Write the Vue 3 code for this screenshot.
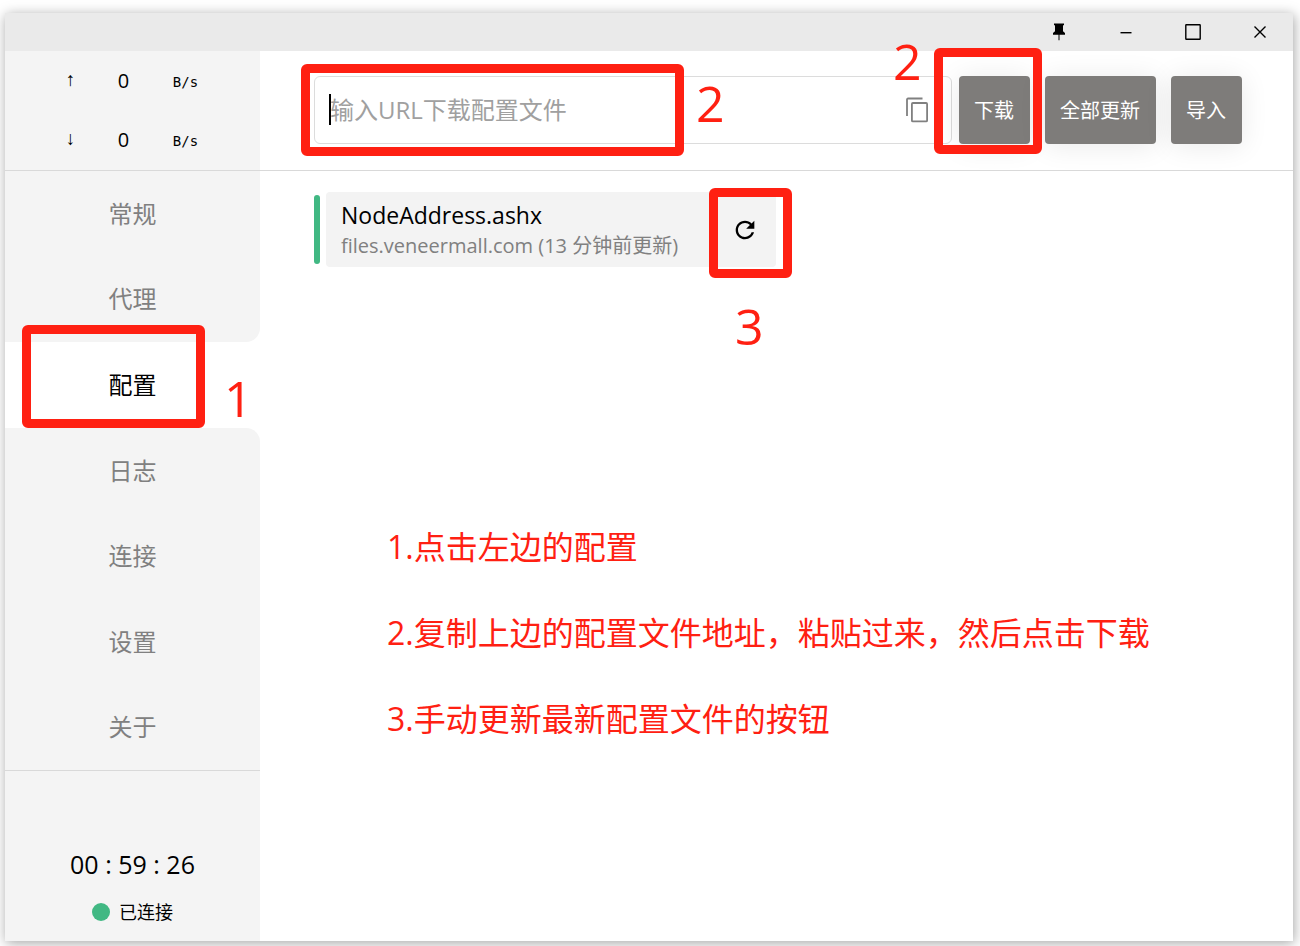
<script setup>
import { ref } from 'vue'

const url = ref('')
const active = ref('配置')
const navItems = ['常规', '代理', '配置', '日志', '连接', '设置', '关于']
const traffic = [
  { arrow: '↑', value: 0 },
  { arrow: '↓', value: 0 }
]
const steps = [
  '1.点击左边的配置',
  '2.复制上边的配置文件地址，粘贴过来，然后点击下载',
  '3.手动更新最新配置文件的按钮'
]
</script>

<template>
  <div class="desktop">
    <div class="window">
      <header class="titlebar">
        <button type="button" aria-label="置顶">
          <svg width="14" height="18" viewBox="0 0 14 18">
            <path d="M2 0.5h10v1.8h-1v6l2 1.7v1.7H1V10l2-1.7v-6H2z" />
            <path d="M6.5 11h1v6.2h-1z" />
          </svg>
        </button>
        <button type="button" aria-label="最小化">
          <svg width="12" height="18" viewBox="0 0 12 18"><path d="M0.5 9h11v1.4h-11z" /></svg>
        </button>
        <button type="button" aria-label="最大化">
          <svg width="16" height="16" viewBox="0 0 16 16">
            <rect x="0.8" y="0.8" width="14.4" height="14.4" rx="0.5" fill="none" stroke="#000" stroke-width="1.4" />
          </svg>
        </button>
        <button type="button" aria-label="关闭">
          <svg width="12" height="12" viewBox="0 0 12 12">
            <path d="M0.5 0.5l11 11M11.5 0.5l-11 11" fill="none" stroke="#000" stroke-width="1.4" />
          </svg>
        </button>
      </header>

      <div class="body">
        <aside class="sidebar">
          <div class="traffic">
            <div v-for="row in traffic" :key="row.arrow" class="traffic-row">
              <span class="arrow">{{ row.arrow }}</span>
              <span class="amount">{{ row.value }}</span>
              <span class="unit">B/s</span>
            </div>
          </div>

          <nav class="nav">
            <div
              v-for="(item, i) in navItems"
              :key="item"
              class="nav-cell"
              :class="{
                active: item === active,
                before: navItems[i + 1] === active,
                after: i > 0 && navItems[i - 1] === active
              }"
            >
              <button type="button" @click="active = item">{{ item }}</button>
              <template v-if="item === '配置'">
                <span class="mark mark-nav"></span>
                <span class="digit digit-nav">1</span>
              </template>
            </div>
          </nav>

          <footer class="status">
            <div class="timer">00 : 59 : 26</div>
            <div class="connection"><span class="dot"></span>已连接</div>
          </footer>
        </aside>

        <main class="main">
          <div class="toolbar">
            <div class="field">
              <input v-model="url" type="text" placeholder="输入URL下载配置文件" aria-label="输入URL下载配置文件" />
              <span class="caret"></span>
              <button type="button" class="copy" aria-label="粘贴">
                <svg width="24" height="26" viewBox="0 0 24 26" fill="none" stroke="#808080" stroke-width="1.8">
                  <path d="M2 19V2.5a1 1 0 0 1 1-1h14.5" />
                  <rect x="6.9" y="6" width="15.2" height="18.4" rx="1" />
                </svg>
              </button>
              <span class="mark mark-field"></span>
              <span class="digit digit-field">2</span>
            </div>
            <div class="actions">
              <div class="action">
                <button type="button">下载</button>
                <span class="mark mark-download"></span>
                <span class="digit digit-download">2</span>
              </div>
              <div class="action"><button type="button">全部更新</button></div>
              <div class="action"><button type="button">导入</button></div>
            </div>
          </div>

          <section class="profile">
            <span class="bar"></span>
            <div class="card">
              <div class="info">
                <div class="name">NodeAddress.ashx</div>
                <div class="source">files.veneermall.com (13 分钟前更新)</div>
              </div>
              <div class="refresh">
                <button type="button" aria-label="更新">
                  <svg width="28" height="28" viewBox="0 0 24 24">
                    <path d="M17.65 6.35C16.2 4.9 14.21 4 12 4c-4.42 0-7.99 3.58-7.99 8s3.57 8 7.99 8c3.73 0 6.84-2.55 7.73-6h-2.08c-.82 2.33-3.04 4-5.65 4-3.31 0-6-2.69-6-6s2.69-6 6-6c1.66 0 3.14.69 4.22 1.78L13 11h7V4l-2.35 2.35z" />
                  </svg>
                </button>
                <span class="mark mark-refresh"></span>
                <span class="digit digit-refresh">3</span>
              </div>
            </div>
          </section>

          <div class="steps">
            <p v-for="step in steps" :key="step">{{ step }}</p>
          </div>
        </main>
      </div>
    </div>
  </div>
</template>

<style>
body {
  background: #fff;
}
</style>

<style scoped>
.desktop {
  box-sizing: border-box;
  min-height: 100vh;
  padding: 13px 7px 5px 5px;
  display: flex;
}
.window {
  flex: 1;
  min-width: 0;
  display: flex;
  flex-direction: column;
  background: #fff;
  box-shadow: 1px 2px 12px rgba(0, 0, 0, 0.36);
  font-family: "Open Sans", "Noto Sans CJK SC", sans-serif;
  color: #000;
}
button {
  border: 0;
  padding: 0;
  background: none;
  font: inherit;
  color: inherit;
  cursor: pointer;
}
svg {
  display: block;
}
.titlebar {
  height: 38px;
  display: flex;
  justify-content: flex-end;
  background: #eaeaea;
}
.titlebar button {
  width: 67px;
  display: flex;
  align-items: center;
  justify-content: center;
}
.body {
  flex: 1;
  display: flex;
}
.sidebar {
  width: 255px;
  flex: none;
  display: flex;
  flex-direction: column;
}
.traffic {
  height: 119px;
  background: #f4f4f4;
  border-bottom: 1px solid #d9d9d9;
}
.traffic-row {
  height: 59px;
  display: grid;
  grid-template-columns: 30px 76px 48px;
  justify-content: center;
  align-items: center;
}
.arrow,
.amount,
.unit {
  text-align: center;
}
.arrow {
  font-family: "Liberation Mono", monospace;
  font-size: 19px;
}
.amount {
  font-size: 20px;
}
.unit {
  padding-top: 3px;
  font-family: "DejaVu Sans Mono", monospace;
  font-size: 14px;
}
.nav {
  flex: 1;
  display: flex;
  flex-direction: column;
  border-bottom: 1px solid #d9d9d9;
}
.nav-cell {
  flex: 1;
  position: relative;
  display: flex;
  background: #f4f4f4;
  color: #808080;
  font-size: 24px;
}
.nav-cell button {
  flex: 1;
  padding-bottom: 3px;
}
.nav-cell.active {
  background: #fff;
  color: #000;
}
.nav-cell.before {
  border-bottom-right-radius: 14px;
}
.nav-cell.after {
  border-top-right-radius: 14px;
}
.status {
  height: 170px;
  box-sizing: border-box;
  padding-bottom: 14px;
  display: flex;
  flex-direction: column;
  align-items: center;
  justify-content: flex-end;
  gap: 17px;
  background: #f4f4f4;
}
.timer {
  font-size: 25px;
  line-height: 32px;
}
.connection {
  display: flex;
  align-items: center;
  gap: 9px;
  font-size: 18px;
  line-height: 30px;
}
.dot {
  width: 18px;
  height: 18px;
  border-radius: 50%;
  background: #41b883;
}
.main {
  flex: 1;
  min-width: 0;
}
.toolbar {
  height: 117px;
  padding: 0 51px 2px 54px;
  display: flex;
  align-items: center;
  gap: 7px;
  border-bottom: 1px solid #d9d9d9;
}
.field {
  flex: 1;
  min-width: 0;
  position: relative;
  height: 68px;
  box-sizing: border-box;
  display: flex;
  align-items: center;
  border: 1px solid #dcdcdc;
  border-radius: 6px;
}
.field input {
  flex: 1;
  min-width: 0;
  height: 66px;
  border: 0;
  padding: 0 15px;
  outline: 0;
  background: none;
  font: inherit;
  font-size: 24px;
}
.field input::placeholder {
  color: #a0a0a0;
  opacity: 1;
}
.caret {
  position: absolute;
  left: 14px;
  top: 17px;
  width: 2px;
  height: 31px;
  background: #000;
}
.copy {
  margin-right: 22px;
}
.actions {
  display: flex;
  gap: 15px;
}
.action {
  position: relative;
}
.action button {
  height: 68px;
  padding: 0 16px 0 15px;
  border-radius: 4px;
  background: #7e7c7a;
  color: #fff;
  font-size: 20px;
  box-shadow: 0 2px 28px rgba(0, 0, 0, 0.09);
}
.profile {
  margin: 21px 54px 0;
  display: flex;
  align-items: center;
  gap: 6px;
}
.bar {
  width: 6px;
  height: 69px;
  border-radius: 3px;
  background: #41b883;
}
.card {
  width: 450px;
  height: 75px;
  box-sizing: border-box;
  padding: 0 17px 0 15px;
  display: flex;
  align-items: center;
  justify-content: space-between;
  border-radius: 4px;
  background: #f3f3f3;
}
.name {
  font-size: 23px;
  line-height: 32px;
}
.source {
  font-size: 20px;
  line-height: 30px;
  color: #808080;
  white-space: nowrap;
}
.refresh {
  position: relative;
  display: flex;
}
.steps {
  margin: 237px 0 0 127px;
  color: #ff2012;
  font-size: 32px;
  line-height: 86px;
}
.steps p {
  margin: 0;
}
.mark {
  position: absolute;
  box-sizing: border-box;
  border: 9px solid #ff2012;
  border-radius: 6px;
  pointer-events: none;
  z-index: 1;
}
.digit {
  position: absolute;
  color: #ff2012;
  font-size: 50px;
  line-height: 50px;
  pointer-events: none;
  z-index: 1;
}
.mark-nav {
  left: 17px;
  top: -17px;
  width: 183px;
  height: 103px;
}
.digit-nav {
  left: 219px;
  top: 31px;
}
.mark-field {
  left: -14px;
  top: -13px;
  width: 383px;
  height: 92px;
}
.digit-field {
  left: 381px;
  top: 1px;
}
.mark-download {
  left: -25px;
  top: -28px;
  width: 108px;
  height: 106px;
}
.digit-download {
  left: -66px;
  top: -40px;
}
.mark-refresh {
  left: -22px;
  top: -28px;
  width: 83px;
  height: 90px;
}
.digit-refresh {
  left: 4px;
  top: 85px;
}
</style>
